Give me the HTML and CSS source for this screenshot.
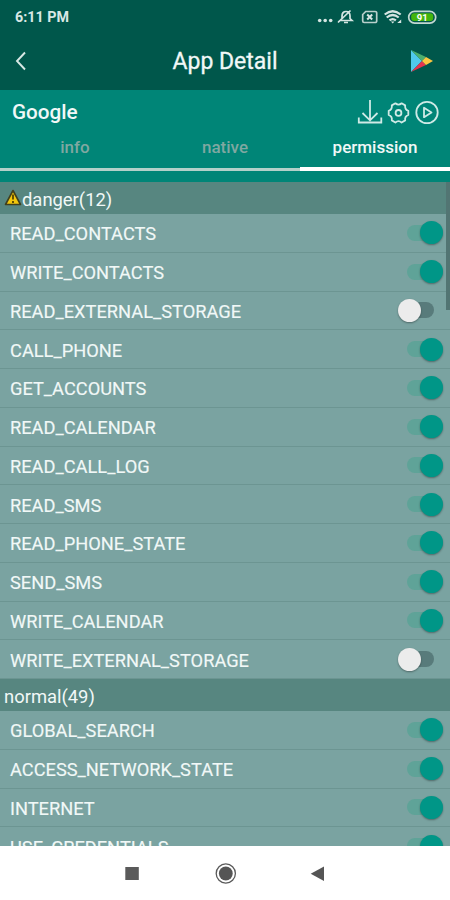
FILE: index.html
```
<!DOCTYPE html>
<html lang="en">
<head>
    <meta charset="UTF-8">
    <meta name="viewport" content="width=device-width, initial-scale=1.0">
    <title>App Detail</title>
    <link rel="stylesheet" href="styles.css">
</head>
<body>
    <div class="phone">
        <div class="status-bar">
            <span class="time">6:11 PM</span>
            <svg class="status-icons" width="122" height="16" viewBox="0 0 122 16">
                <g fill="#d5e5e2">
                    <circle cx="2.700" cy="11.5" r="1.800"/>
                    <circle cx="8.200" cy="11.5" r="1.800"/>
                    <circle cx="13.700" cy="11.5" r="1.800"/>
                </g>
                <!-- muted bell -->
                <g transform="translate(-1.500 0)" fill="none" stroke="#d5e5e2" stroke-width="1.700">
                    <path d="M24.500 11.500l2-2V7c0-3 2-4.500 4-4.500s4 1.500 4 4.500v2.500l2 2zM28.500 13.500h4M22.500 13.500L35 1.500"/>
                </g>
                <g transform="translate(2.200 0)">
                    <!-- no sim -->
                    <path d="M46.500 2.500H56a1.500 1.500 0 0 1 1.500 1.500v8a1.500 1.500 0 0 1-1.500 1.500H45a1.500 1.500 0 0 1-1.500-1.500V5.500z" fill="none" stroke="#b9d0cc" stroke-width="1.700"/>
                    <path d="M48 5.500l5 5M53 5.500l-5 5" stroke="#d5e5e2" stroke-width="2"/>
                    <!-- wifi -->
                    <path d="M65.500 5.500q8-6.500 16 0M67.500 8.500q6-5 12 0M70.300 11.300q3.200-2.500 6.400 0" fill="none" stroke="#d5e5e2" stroke-width="2.200"/>
                    <path d="M73.500 14.500l-1.800-2h3.600zM82 10.500v3.500h-4z" fill="#d5e5e2"/>
                    <!-- battery -->
                    <rect x="89.500" y="2.300" width="27" height="11.800" rx="5.900" fill="none" stroke="#c3d8d2" stroke-width="1.700"/>
                    <rect x="92" y="4.300" width="22" height="7.800" rx="3" fill="#43b50d"/>
                    <text x="103" y="11.700" text-anchor="middle" class="battery-text">91</text>
                </g>
            </svg>
        </div>

        <div class="title-bar">
            <svg class="back" width="22" height="20" viewBox="0 0 22 20">
                <path d="M10 1.500L2 10l8 8.500" fill="none" stroke="#d8e8e5" stroke-width="1.900"/>
            </svg>
            <h1>App Detail</h1>
            <svg class="store" width="22" height="24" viewBox="0 0 22 24">
                <path d="M0 1v22l11-11z" fill="#4fc9ec"/>
                <path d="M0 1l11 11 4-4z" fill="#4caf6e"/>
                <path d="M0 23l11-11 4 4z" fill="#e4344f"/>
                <path d="M15 8l7 4-7 4-4-4z" fill="#fbc740"/>
            </svg>
        </div>

        <div class="app-head">
            <div class="app-row">
                <span class="app-name">Google</span>
                <svg width="84" height="28" viewBox="0 0 84 28" fill="none" stroke="#cfeae6" stroke-width="1.800">
                    <!-- download -->
                    <path d="M13 2v20M5.500 15L13 22.300 20.500 15M1.800 19.500V24.500h22.500v-5"/>
                    <!-- settings -->
                    <path d="M38.400 5.300Q41.500 8 44.600 5.300L48.200 7.400Q47.500 11.500 51.300 12.800V17Q47.500 18.300 48.200 22.400L44.600 24.500Q41.500 21.800 38.400 24.500L34.800 22.400Q35.500 18.300 31.700 17V12.800Q35.500 11.500 34.800 7.400Z" stroke-linejoin="round"/>
                    <circle cx="41.500" cy="14.900" r="2.900"/>
                    <!-- launch -->
                    <circle cx="70" cy="14.500" r="10.700"/>
                    <path d="M67 9.800v9.400l7.500-4.700z" stroke-linejoin="round"/>
                </svg>
            </div>
            <div class="tabs">
                <div class="tab">info</div>
                <div class="tab">native</div>
                <div class="tab active">permission</div>
            </div>
        </div>

        <div class="list">
            <div class="group">
                <svg width="18" height="18" viewBox="0 0 18 18">
                    <path d="M9 1.500L16.500 15.500h-15z" fill="#f3c70c" stroke="#40401f" stroke-width="1.600" stroke-linejoin="round"/>
                    <path d="M9 5.500v5M9 12v2" stroke="#4a3c00" stroke-width="1.700"/>
                </svg>
                <span>danger(12)</span>
            </div>
            <div class="item"><span>READ_CONTACTS</span><i class="switch on"></i></div>
            <div class="item"><span>WRITE_CONTACTS</span><i class="switch on"></i></div>
            <div class="item"><span>READ_EXTERNAL_STORAGE</span><i class="switch"></i></div>
            <div class="item"><span>CALL_PHONE</span><i class="switch on"></i></div>
            <div class="item"><span>GET_ACCOUNTS</span><i class="switch on"></i></div>
            <div class="item"><span>READ_CALENDAR</span><i class="switch on"></i></div>
            <div class="item"><span>READ_CALL_LOG</span><i class="switch on"></i></div>
            <div class="item"><span>READ_SMS</span><i class="switch on"></i></div>
            <div class="item"><span>READ_PHONE_STATE</span><i class="switch on"></i></div>
            <div class="item"><span>SEND_SMS</span><i class="switch on"></i></div>
            <div class="item"><span>WRITE_CALENDAR</span><i class="switch on"></i></div>
            <div class="item"><span>WRITE_EXTERNAL_STORAGE</span><i class="switch"></i></div>
            <div class="group"><span>normal(49)</span></div>
            <div class="item"><span>GLOBAL_SEARCH</span><i class="switch on"></i></div>
            <div class="item"><span>ACCESS_NETWORK_STATE</span><i class="switch on"></i></div>
            <div class="item"><span>INTERNET</span><i class="switch on"></i></div>
            <div class="item"><span>USE_CREDENTIALS</span><i class="switch on"></i></div>
            <div class="scrollbar"></div>
        </div>

        <div class="nav-bar">
            <svg width="450" height="54" viewBox="0 0 450 54">
                <rect x="125.300" y="21" width="13.500" height="13" fill="#5a5a5a"/>
                <circle cx="225.800" cy="27.500" r="9.600" fill="none" stroke="#5a5a5a" stroke-width="1.300"/>
                <circle cx="225.800" cy="27.500" r="6.900" fill="#555"/>
                <path d="M324 20.500v14.500l-13.300-7.300z" fill="#555"/>
            </svg>
        </div>
    </div>
</body>
</html>
```

FILE: styles.css
```
body, h1 {
    margin: 0;
    padding: 0;
}
body {
    font-family: Roboto, "Liberation Sans", sans-serif;
    color: #f1f8f7;
}
svg {
    display: block;
    flex: none;
}
.phone {
    display: flex;
    flex-direction: column;
    width: 450px;
    height: 900px;
    overflow: hidden;
}

/* status + title */
.status-bar {
    display: flex;
    justify-content: space-between;
    align-items: center;
    height: 34px;
    box-sizing: border-box;
    padding: 0 11px 0 15px;
    background: #00574b;
}
.time {
    font-size: 14.3px;
    font-weight: 700;
    color: #d9e8e5;
}
.battery-text {
    font-size: 9.5px;
    font-weight: 700;
    fill: #fff;
}
.title-bar {
    display: flex;
    justify-content: space-between;
    align-items: center;
    height: 56px;
    box-sizing: border-box;
    padding: 0 17px 2px 15px;
    background: #00574b;
}
.title-bar h1 {
    padding: 2px 0 0 2px;
    font-size: 23px;
    font-weight: 400;
    line-height: 30px;
    -webkit-text-stroke: 0.3px;
}

/* app name and tabs */
.app-head {
    height: 92px;
    background: #008577;
}
.app-row {
    display: flex;
    justify-content: space-between;
    align-items: center;
    height: 43px;
    padding: 0 9px 0 12px;
}
.app-name {
    font-size: 20.7px;
    font-weight: 500;
}
.tabs {
    display: flex;
}
.tab {
    flex: 1;
    height: 38px;
    box-sizing: border-box;
    border-bottom: 3px solid #b3d0c9;
    font-size: 17px;
    font-weight: 500;
    line-height: 28px;
    text-align: center;
    color: #7fa8a1;
}
.tab.active {
    border-bottom: 4px solid #fff;
    color: #f1f8f7;
}

/* permission list */
.list {
    position: relative;
    flex: 1;
    overflow: hidden;
    background: #7aa3a1;
}
.group {
    display: flex;
    align-items: center;
    height: 32px;
    padding-left: 4px;
    background: #578680;
    font-size: 18.4px;
}
.group span {
    padding-top: 2px;
}
.item {
    display: flex;
    justify-content: space-between;
    align-items: center;
    height: 38.75px;
    box-sizing: border-box;
    padding: 0 7px 0 10px;
    border-bottom: 1px solid #6c9592;
    font-size: 18.25px;
}
.item span {
    padding-top: 2px;
    -webkit-text-stroke: 0.15px;
}
.switch {
    position: relative;
    width: 36px;
    height: 16px;
    border-radius: 8px;
    background: #5fa398;
}
.switch::after {
    content: "";
    position: absolute;
    top: -3.5px;
    right: 0;
    width: 23px;
    height: 23px;
    border-radius: 50%;
    background: #009687;
    box-shadow: 0 1px 2px rgba(0, 0, 0, 0.35);
}
.switch:not(.on) {
    width: 34px;
    margin-right: 9px;
    background: #587b7b;
}
.switch:not(.on)::after {
    left: -2px;
    background: #ececec;
}
.scrollbar {
    position: absolute;
    top: 0;
    right: 0;
    width: 4px;
    height: 128px;
    background: #527573;
}

.nav-bar {
    height: 54px;
    background: #fff;
}
```
